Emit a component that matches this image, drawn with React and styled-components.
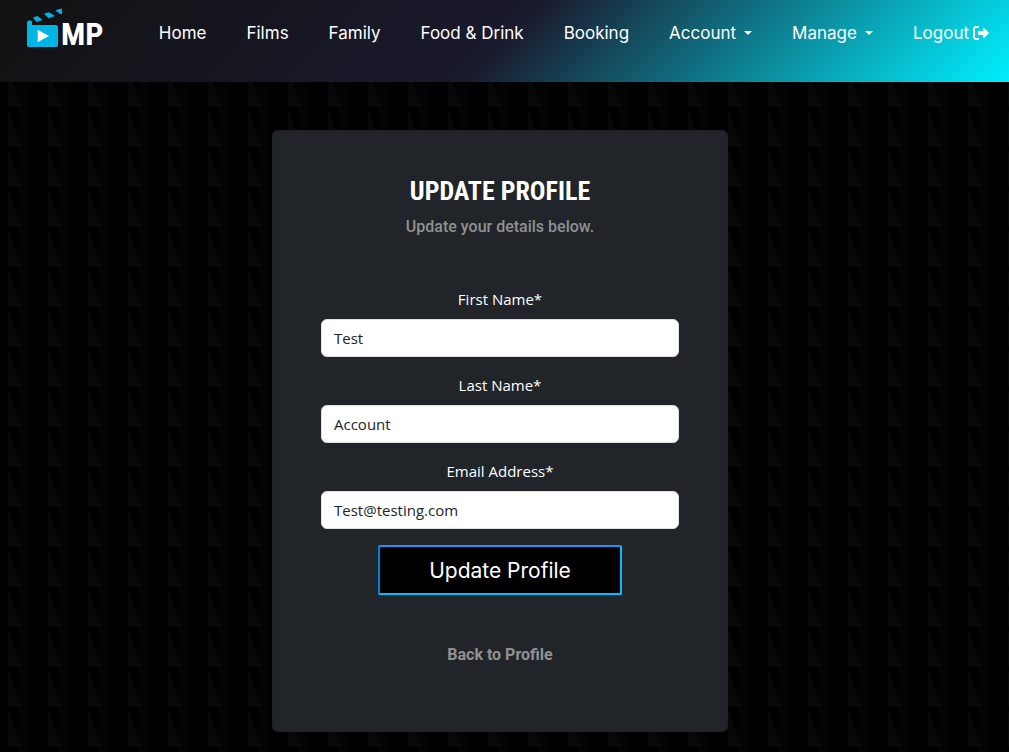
import React from "react";
import styled, { createGlobalStyle } from "styled-components";

const GlobalStyle = createGlobalStyle`
  *, *::before, *::after { box-sizing: border-box; }
  body {
    margin: 0;
    min-height: 100vh;
    font-family: "Open Sans", "Noto Sans", sans-serif;
    font-size: 15px;
    line-height: 24px;
    color: #fff;
    background-color: #000;
    background-image:
      linear-gradient(90deg, transparent 10px, rgba(255, 255, 255, 0.01) 10px, rgba(255, 255, 255, 0.01) 20px, transparent 20px),
      linear-gradient(transparent 36px, #000 36px),
      conic-gradient(from 160deg at 0 0, #080808 20deg, transparent 0);
    background-size: 40px 40px;
    background-position: 8px 30px;
  }
`;

const Header = styled.header`
  display: flex;
  align-items: flex-start;
  justify-content: space-between;
  min-height: 82px;
  padding: 8px 20px 0 27px;
  background: linear-gradient(135deg, #111 0%, #1a1a2e 50%, #00f0ff 100%);
`;

const Brand = styled.a`
  display: block;
  line-height: 0;
`;

const LogoMark = styled.svg`
  display: block;
  width: 84px;
  height: 48px;
  line-height: 1;
`;

const NavList = styled.ul`
  display: flex;
  gap: 40px;
  margin: 0;
  padding: 13px 0 0;
  list-style: none;
`;

const NavLink = styled.a`
  display: flex;
  align-items: center;
  gap: ${(p) => (p.$tight ? 4 : 8)}px;
  font-family: Inter, sans-serif;
  font-size: 17px;
  line-height: 24px;
  color: #fff;
  text-decoration: none;
  white-space: nowrap;
`;

const Caret = styled.span`
  border: 4px solid transparent;
  border-top-color: #fff;
  border-bottom: 0;
`;

const Main = styled.main`
  display: flex;
  justify-content: center;
  padding: 48px 9px 20px 0;
`;

const Card = styled.section`
  width: 100%;
  max-width: 456px;
  padding: 40px 48px 64px;
  border-radius: 6px;
  border: 1px solid #1e2125;
  background: #212529;
  text-align: center;
`;

const Title = styled.h1`
  margin: 0;
  font-family: "Roboto Condensed", "Liberation Sans Narrow", sans-serif;
  font-size: 26px;
  font-weight: 700;
  line-height: 40px;
  text-transform: uppercase;
`;

const Subtitle = styled.p`
  margin: 4px 0 48px;
  font-family: Roboto, sans-serif;
  font-size: 16px;
  font-weight: 500;
  color: #909192;
`;

const Field = styled.div`
  margin-bottom: 16px;
`;

const Label = styled.label`
  display: block;
  margin-bottom: 8px;
`;

const Input = styled.input`
  display: block;
  width: 100%;
  height: 38px;
  padding: 6px 12px;
  border: 1px solid #dee2e6;
  border-radius: 6px;
  background: #fff;
  color: #212529;
  font: inherit;
`;

const SubmitButton = styled.button`
  display: block;
  height: 50px;
  margin: 0 auto;
  padding: 0 49px;
  border: 2px solid;
  border-color: #1e90ff #00bfff #00bfff #0080d8;
  border-radius: 2px;
  background: #000;
  color: #fff;
  font-family: Inter, sans-serif;
  font-size: 21px;
`;

const BackLink = styled.a`
  display: inline-block;
  margin-top: 48px;
  font-family: Roboto, sans-serif;
  font-size: 16px;
  font-weight: 700;
  color: #909192;
  text-decoration: none;
`;

const Logo = () => (
  <LogoMark viewBox="0 0 84 48" role="img" aria-label="MP">
    <g fill="#00b4e6">
      <path d="M0 14.5 Q0 12.5 2 12.5 H3.5 Q5 12.5 5 14 V17 H29 Q31 17 31 19 V37 Q31 39 29 39 H2 Q0 39 0 37 Z" />
      <path d="M6 9.5 Q8 8.5 10.5 8 L15.5 12 Q12 13 9.5 14 Z" />
      <path d="M17 5.8 L22 4.3 L28 8 L21.5 10.2 Z" />
      <path d="M28.5 2.2 L34.5 0.5 Q35.5 3 35 6 L32.5 5.8 Z" />
    </g>
    <path d="M10.7 21.8 L22 28 L10.7 34.3 Z" fill="#fff" />
    <text x="34" y="37" fill="#fff" fontFamily="Roboto Condensed, sans-serif" fontWeight="700" fontSize="32">MP</text>
  </LogoMark>
);

const LogoutIcon = () => (
  <svg width="16" height="16" viewBox="0 0 512 512" fill="currentColor" aria-hidden="true">
    <path d="M96 480h64C177.700 480 192 465.700 192 448S177.700 416 160 416H96c-17.670 0-32-14.330-32-32V128c0-17.670 14.330-32 32-32h64C177.700 96 192 81.670 192 64S177.700 32 160 32H96C42.980 32 0 74.980 0 128v256C0 437 42.980 480 96 480z" />
    <path d="M504.800 238.500l-144.100-136c-6.975-6.578-17.200-8.375-26-4.594c-8.803 3.797-14.510 12.470-14.510 22.050l-.0918 72l-128-.001c-17.690 0-32.020 14.330-32.020 32v64c0 17.670 14.340 32 32.020 32l128 .001l.0918 71.100c0 9.578 5.707 18.250 14.510 22.050c8.803 3.781 19.030 1.984 26-4.594l144.100-136C514.400 264.400 514.400 247.600 504.800 238.500z" />
  </svg>
);

const navItems = [
  { label: "Home" },
  { label: "Films" },
  { label: "Family" },
  { label: "Food & Drink" },
  { label: "Booking" },
  { label: "Account", menu: true },
  { label: "Manage", menu: true },
  { label: "Logout", logout: true },
];

const fields = [
  { id: "first-name", label: "First Name*", type: "text", value: "Test" },
  { id: "last-name", label: "Last Name*", type: "text", value: "Account" },
  { id: "email", label: "Email Address*", type: "email", value: "Test@testing.com" },
];

export default function App() {
  return (
    <>
      <GlobalStyle />
      <Header>
        <Brand href="#"><Logo /></Brand>
        <nav>
          <NavList>
            {navItems.map(({ label, menu, logout }) => (
              <li key={label}>
                <NavLink href="#" $tight={logout}>
                  {label}
                  {menu && <Caret />}
                  {logout && <LogoutIcon />}
                </NavLink>
              </li>
            ))}
          </NavList>
        </nav>
      </Header>
      <Main>
        <Card>
          <Title>Update Profile</Title>
          <Subtitle>Update your details below.</Subtitle>
          <form onSubmit={(e) => e.preventDefault()}>
            {fields.map(({ id, label, type, value }) => (
              <Field key={id}>
                <Label htmlFor={id}>{label}</Label>
                <Input id={id} type={type} defaultValue={value} />
              </Field>
            ))}
            <SubmitButton type="submit">Update Profile</SubmitButton>
          </form>
          <BackLink href="#">Back to Profile</BackLink>
        </Card>
      </Main>
    </>
  );
}
